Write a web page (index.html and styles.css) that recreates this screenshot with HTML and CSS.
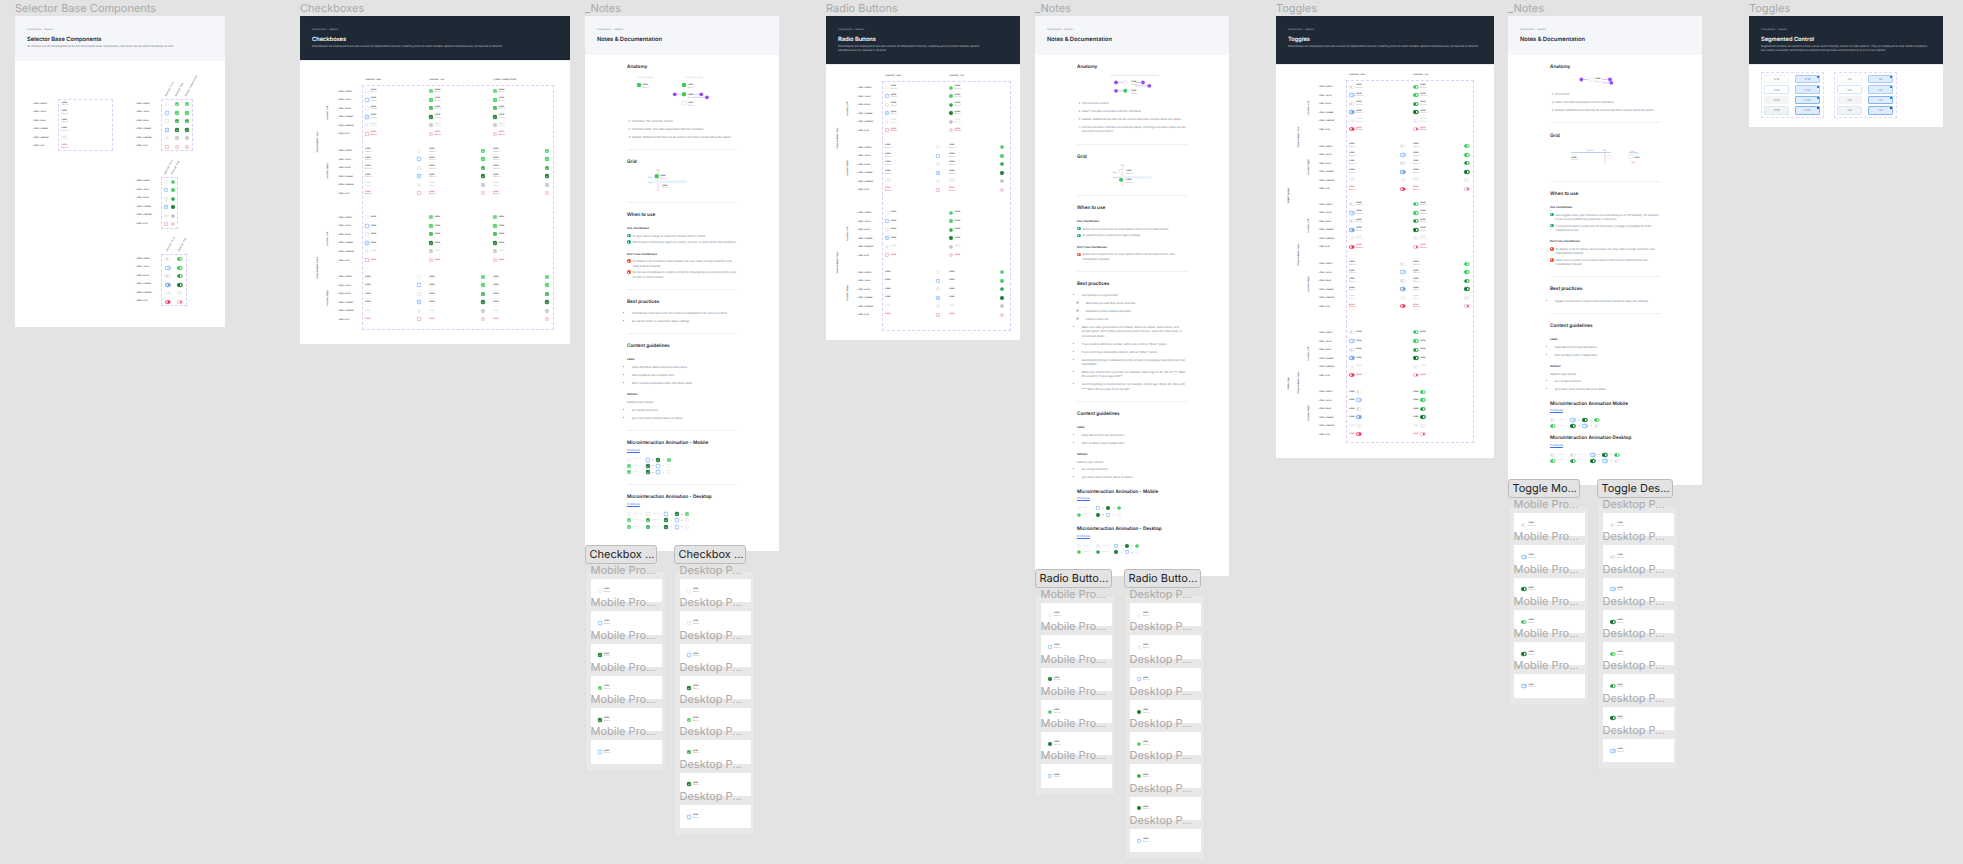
FILE: index.html
```html
<!DOCTYPE html>
<html lang="en">
<head>
    <meta charset="UTF-8">
    <meta name="viewport" content="width=device-width, initial-scale=1.0">
    <title>Selector - Components</title>
    <link rel="stylesheet" href="styles.css">
</head>
<body>
<div class="canvas">

    <!-- Selector base -->
    <div class="board b-base">
        <div class="board-name">Selector Base Components</div>
        <div class="sheet">
            <header class="sheet-head light">
                <div class="crumbs">Components &nbsp;›&nbsp; Selector</div>
                <h1>Selector Base Components</h1>
                <p>All of these are the building blocks for the full selector base components, but some can be used individually as well.</p>
            </header>
            <div class="base-body">
                <div class="base-left" id="baseLabels"></div>
                <div class="base-right">
                    <div id="baseCheck"></div>
                    <div id="baseRadio"></div>
                    <div id="baseToggle"></div>
                </div>
            </div>
        </div>
    </div>

    <!-- Checkboxes -->
    <div class="board b-check">
        <div class="board-name">Checkboxes</div>
        <div class="sheet">
            <header class="sheet-head dark">
                <div class="crumbs">Components &nbsp;›&nbsp; Selector</div>
                <h1>Checkboxes</h1>
                <p>Checkboxes are employed to provide a series of independent choices, enabling users to select multiple options simultaneously as required or desired.</p>
            </header>
            <div class="matrix m-check" id="matrixCheck"></div>
        </div>
    </div>

    <div class="board b-notes1">
        <div class="board-name">_Notes</div>
        <div class="sheet">
            <header class="sheet-head light short">
                <div class="crumbs">Components &nbsp;›&nbsp; Selector</div>
                <h1>Notes &amp; Documentation</h1>
            </header>
            <div class="notes">
                <section class="note-sec">
                    <h2>Anatomy</h2>
                    <svg class="dg" width="111" height="44.1">
                        <text class="dg-pale" x="10" y="4">Checkbox Basic</text>
                        <text class="dg-pale" x="58" y="4">Checkbox Group</text>
                        <rect class="dg-green" x="10" y="9" width="4" height="4" rx="1"/>
                        <text class="dg-label" x="15.5" y="11">Label</text>
                        <text class="dg-sub" x="15.5" y="14">Subtext</text>
                        <rect class="dg-green" x="55" y="9" width="4" height="4" rx="1"/>
                        <text class="dg-label" x="60.5" y="11">Label</text>
                        <text class="dg-sub" x="60.5" y="14">Subtext</text>
                        <path class="dg-line" d="M48 20.3H55M64 20.3H74M66 23.3H80"/>
                        <rect class="dg-green" x="55" y="18.3" width="4" height="4" rx="1"/>
                        <text class="dg-label" x="60.5" y="20.5">Label</text>
                        <text class="dg-sub" x="60.5" y="23.5">Subtext</text>
                        <circle class="dg-pin" cx="47.7" cy="20.3" r="1.9"/>
                        <circle class="dg-pin" cx="74.3" cy="20.3" r="1.9"/>
                        <circle class="dg-pin" cx="80" cy="23.3" r="1.9"/>
                        <rect class="dg-off" x="55" y="27" width="4" height="4" rx="1"/>
                        <text class="dg-label" x="60.5" y="29">Label</text>
                        <text class="dg-sub" x="60.5" y="32">Subtext</text>
                    </svg>
                    <ol class="note-list">
                        <li>Checkbox: The selection control.</li>
                        <li>Checkbox label: Text label associated with the checkbox.</li>
                        <li>Subtext: Additional text that can be used to add more context about the option.</li>
                    </ol>
                </section>
                <section class="note-sec">
                    <h2>Grid</h2>
                    <svg class="dg" width="111" height="26.3">
                        <rect class="dg-pink" x="30.5" y="3" width="1.5" height="19"/>
                        <rect class="dg-band" x="27.3" y="11.5" width="32.4" height="2.6"/>
                        <text class="dg-red" x="29.5" y="2">Gap</text>
                        <text class="dg-vio" x="21.5" y="8.5">Gap</text>
                        <text class="dg-blue" x="21" y="13.5">Right</text>
                        <rect class="dg-green" x="27.7" y="5.2" width="4" height="4" rx="1"/>
                        <text class="dg-label" x="33" y="7">Label</text>
                        <text class="dg-sub" x="33" y="10">Subtext</text>
                        <text class="dg-label" x="35" y="16.5">Label</text>
                        <text class="dg-sub" x="35" y="19">Subtext</text>
                    </svg>
                </section>
                <section class="note-sec">
                    <h2>When to use</h2>
                    <h3>Use checkboxes</h3>
                    <ul class="do-list">
                        <li class="do">To give users a range of options to choose from in a form.</li>
                        <li class="do">When users confirm they agree to a policy, service, or other terms and conditions.</li>
                    </ul>
                    <h3>Don't use checkboxes</h3>
                    <ul class="do-list">
                        <li class="dont">To display a list of options where people can only make a single selection (use radio buttons instead)</li>
                        <li class="dont">Do not use checkboxes in a table cell that is showing data or used to control a set of rows or items instead</li>
                    </ul>
                </section>
                <section class="note-sec">
                    <h2>Best practices</h2>
                    <ul class="note-bullets">
                        <li>Checkboxes work best when the control is separated in the menu of a form</li>
                        <li>An explicit action is required to apply settings</li>
                    </ul>
                </section>
                <section class="note-sec">
                    <h2>Content guidelines</h2>
                    <h3>Label</h3>
                    <ul class="note-bullets">
                        <li>Keep checkbox labels short and descriptive.</li>
                        <li>Start all labels with a capital letter.</li>
                        <li>Don't include punctuation after checkbox labels.</li>
                    </ul>
                    <h3>Subtext</h3>
                    <p class="note-copy">Subtext copy should:</p>
                    <ul class="note-bullets">
                        <li>be a single sentence</li>
                        <li>give some extra context about an option</li>
                    </ul>
                </section>
                <section class="note-sec micro">
                    <h2>Microinteraction Animation - Mobile</h2>
                    <a class="proto-link">Prototype</a>
                    <div class="seq-list" data-kind="check" data-seq="off default;Hover in;off focus;>;on pressed;>;on default|on default;Hover in;on pressed;>;off focus;>;off default|on default;Hover in;on pressed;>;off focus;>;off default"></div>
                </section>
                <section class="note-sec micro last">
                    <h2>Microinteraction Animation - Desktop</h2>
                    <a class="proto-link">Prototype</a>
                    <div class="seq-list" data-kind="check" data-seq="off default;Hover in;off hover;Hover in;off focus;>;on pressed;>;on default|on default;Hover in;on hover;Hover in;on pressed;>;off focus;>;off default|on default;Hover in;on hover;Hover in;on pressed;>;off focus;>;off default"></div>
                </section>
            </div>
        </div>
    </div>

    <!-- Radio buttons -->
    <div class="board b-radio">
        <div class="board-name">Radio Buttons</div>
        <div class="sheet">
            <header class="sheet-head dark tall">
                <div class="crumbs">Components &nbsp;›&nbsp; Selector</div>
                <h1>Radio Buttons</h1>
                <p>Checkboxes are employed to provide a series of independent choices, enabling users to select multiple options simultaneously as required or desired.</p>
            </header>
            <div class="matrix m-radio" id="matrixRadio"></div>
        </div>
    </div>

    <div class="board b-notes2">
        <div class="board-name">_Notes</div>
        <div class="sheet">
            <header class="sheet-head light short">
                <div class="crumbs">Components &nbsp;›&nbsp; Selector</div>
                <h1>Notes &amp; Documentation</h1>
            </header>
            <div class="notes">
                <section class="note-sec">
                    <h2>Anatomy</h2>
                    <svg class="dg" width="111" height="26.7">
                        <text class="dg-pale" x="33" y="2.2">Text input component displayed as radio group</text>
                        <path class="dg-line" d="M39 8.5H48M58 8.5H66M58 11.8H72"/>
                        <rect class="dg-off" x="46" y="6.5" width="4" height="4" rx="2"/>
                        <text class="dg-label" x="54" y="8.3">Label</text>
                        <text class="dg-sub" x="54" y="11.3">Subtext</text>
                        <circle class="dg-pin" cx="39" cy="8.5" r="1.9"/>
                        <circle class="dg-pin" cx="66" cy="8.5" r="1.9"/>
                        <circle class="dg-pin" cx="72.3" cy="11.8" r="1.9"/>
                        <path class="dg-line" d="M39 16.8H46"/>
                        <circle class="dg-pin" cx="39" cy="16.8" r="1.9"/>
                        <rect class="dg-green" x="46.3" y="14.8" width="4" height="4" rx="2"/>
                        <text class="dg-label" x="54" y="16.8">Label</text>
                        <text class="dg-sub" x="54" y="19.8">Subtext</text>
                    </svg>
                    <ol class="note-list">
                        <li>The selection control.</li>
                        <li>Label: Text label associated with the checkbox.</li>
                        <li>Subtext: Additional text that can be used to add more context about the option.</li>
                        <li>Current selection: Indicates the selected option. Clicking on another option will de-select the current choice.</li>
                    </ol>
                </section>
                <section class="note-sec">
                    <h2>Grid</h2>
                    <svg class="dg" width="111" height="24.5">
                        <rect class="dg-pink" x="44.8" y="3" width="1.5" height="19"/>
                        <rect class="dg-band" x="41" y="12.2" width="33.3" height="2.4"/>
                        <text class="dg-red" x="44" y="2">Gap</text>
                        <text class="dg-vio" x="36" y="9">Gap</text>
                        <text class="dg-blue" x="36" y="14">Right</text>
                        <rect class="dg-off" x="42" y="5.2" width="4" height="4" rx="2"/>
                        <text class="dg-label" x="49" y="7">Label</text>
                        <text class="dg-sub" x="49" y="10">Subtext</text>
                        <rect class="dg-green" x="42" y="13.8" width="4" height="4" rx="2"/>
                        <text class="dg-label" x="49" y="16">Label</text>
                        <text class="dg-sub" x="49" y="19">Subtext</text>
                    </svg>
                </section>
                <section class="note-sec">
                    <h2>When to use</h2>
                    <h3>Use checkboxes</h3>
                    <ul class="do-list">
                        <li class="do">Users have to select one or more options from a list of related items.</li>
                        <li class="do">An explicit action is required to apply settings.</li>
                    </ul>
                    <h3>Don't use checkboxes</h3>
                    <ul class="do-list">
                        <li class="dont">Users have to select one or more options from a list of related items (use checkboxes instead).</li>
                    </ul>
                </section>
                <section class="note-sec">
                    <h2>Best practices</h2>
                    <ul class="note-bullets">
                        <li>List options in a logical order:
                            <ul class="note-bullets sub">
                                <li>Most likely to least likely to be selected</li>
                                <li>Simplest to most complex operation</li>
                                <li>Least to most risk</li>
                            </ul>
                        </li>
                        <li>Make one radio group option the default. Select the safest, most secure, and private option. But if safety and security aren't factors, select the most likely or convenient option.</li>
                        <li>If you need to add more context, add a note within a "None" option.</li>
                        <li>If you can't have all possible options, add an "Other" option.</li>
                        <li>Avoid putting things in alphabetical order unless it is language dependent and not translatable.</li>
                        <li>Make sure choices don't overlap. For example, Select age: 0-20, 20-40 *** "Wow. Oh wouldn't I if your age is 20?"</li>
                        <li>Avoid forgetting to include choices. For example, Select age: Below 20, Above 20 *** "Wow. Did you skip if you are 20?"</li>
                    </ul>
                </section>
                <section class="note-sec tight">
                    <h2>Content guidelines</h2>
                    <h3>Label</h3>
                    <ul class="note-bullets">
                        <li>Keep labels short and descriptive.</li>
                        <li>Start all labels with a capital letter.</li>
                    </ul>
                    <h3>Subtext</h3>
                    <p class="note-copy">Subtext copy should:</p>
                    <ul class="note-bullets">
                        <li>be a single sentence</li>
                        <li>give some extra context about an option</li>
                    </ul>
                </section>
                <section class="note-sec micro plain">
                    <h2>Microinteraction Animation - Mobile</h2>
                    <a class="proto-link">Prototype</a>
                    <div class="seq-list" data-kind="radio" data-seq="off default;Hover in;off focus;>;on pressed;>;on default|on default;Hover in;on pressed;>;off focus;>;off default"></div>
                </section>
                <section class="note-sec micro plain">
                    <h2>Microinteraction Animation - Desktop</h2>
                    <a class="proto-link">Prototype</a>
                    <div class="seq-list" data-kind="radio" data-seq="off default;Hover in;off hover;Hover in;off focus;>;on pressed;>;on default|on default;Hover in;on hover;Hover in;on pressed;>;off focus;>;off default"></div>
                </section>
            </div>
        </div>
    </div>

    <!-- Toggles -->
    <div class="board b-toggle">
        <div class="board-name">Toggles</div>
        <div class="sheet">
            <header class="sheet-head dark tall">
                <div class="crumbs">Components &nbsp;›&nbsp; Selector</div>
                <h1>Toggles</h1>
                <p>Checkboxes are employed to provide a series of independent choices, enabling users to select multiple options simultaneously as required or desired.</p>
            </header>
            <div class="matrix m-toggle" id="matrixToggle"></div>
        </div>
    </div>

    <div class="board b-notes3">
        <div class="board-name">_Notes</div>
        <div class="sheet">
            <header class="sheet-head light short">
                <div class="crumbs">Components &nbsp;›&nbsp; Selector</div>
                <h1>Notes &amp; Documentation</h1>
            </header>
            <div class="notes">
                <section class="note-sec">
                    <h2>Anatomy</h2>
                    <svg class="dg" width="111" height="17.7">
                        <path class="dg-line" d="M31 5.5H38M52 5.5H60M52 8.8H61"/>
                        <rect class="dg-off" x="38.5" y="4" width="5" height="3.2" rx="1.6"/>
                        <text class="dg-label" x="45" y="5.2">Label</text>
                        <text class="dg-sub" x="45" y="8">Subtext</text>
                        <circle class="dg-pin" cx="31.3" cy="5.5" r="1.9"/>
                        <circle class="dg-pin" cx="60" cy="5.5" r="1.9"/>
                        <circle class="dg-pin" cx="61.3" cy="8.8" r="1.9"/>
                    </svg>
                    <ol class="note-list">
                        <li>The control.</li>
                        <li>Label: Text label associated with the checkbox.</li>
                        <li>Subtext: Additional text that can be used to add more context about the option.</li>
                    </ol>
                </section>
                <section class="note-sec">
                    <h2>Grid</h2>
                    <svg class="dg" width="111" height="31.7">
                        <rect class="dg-pink" x="54" y="9.5" width="1.5" height="11"/>
                        <path class="dg-bluel" d="M21.3 9.5H60.6M78.6 9.8H88.6"/>
                        <text class="dg-blue" x="37" y="8">Spread</text>
                        <text class="dg-red" x="53" y="8">Gap</text>
                        <text class="dg-label" x="21.3" y="14.5">Label</text>
                        <text class="dg-sub" x="21.3" y="17">Subtext</text>
                        <rect class="dg-off" x="56" y="12.2" width="5" height="3.2" rx="1.6"/>
                        <text class="dg-blue" x="80.5" y="8.6">Hug</text>
                        <rect class="dg-off" x="77.8" y="12.2" width="5" height="3.2" rx="1.6"/>
                        <text class="dg-label" x="84" y="14.5">Label</text>
                        <text class="dg-red" x="81.5" y="20">Gap</text>
                    </svg>
                </section>
                <section class="note-sec">
                    <h2>When to use</h2>
                    <h3>Use checkboxes</h3>
                    <ul class="do-list">
                        <li class="do">Use toggles when your intention is turn something on or off instantly, for example. If you need to additionally associate a reference.</li>
                        <li class="do">If a physical switch would work for this action, a toggle is probably the best component to use.</li>
                    </ul>
                    <h3>Don't use checkboxes</h3>
                    <ul class="do-list">
                        <li class="dont">To display a list of options where people can only make a single selection (use radio buttons instead)</li>
                        <li class="dont">Users have to select one or more options from a list of related items (use checkboxes instead).</li>
                    </ul>
                </section>
                <section class="note-sec">
                    <h2>Best practices</h2>
                    <ul class="note-bullets">
                        <li>Toggles should never require users to press a button to apply the settings.</li>
                    </ul>
                </section>
                <section class="note-sec tight">
                    <h2>Content guidelines</h2>
                    <h3>Label</h3>
                    <ul class="note-bullets">
                        <li>Keep labels short and descriptive.</li>
                        <li>Start all labels with a capital letter.</li>
                    </ul>
                    <h3>Subtext</h3>
                    <p class="note-copy">Subtext copy should:</p>
                    <ul class="note-bullets">
                        <li>be a single sentence</li>
                        <li>give some extra context about an option</li>
                    </ul>
                </section>
                <section class="note-sec micro plain">
                    <h2>Microinteraction Animation Mobile</h2>
                    <a class="proto-link">Prototype</a>
                    <div class="seq-list" data-kind="toggle" data-seq="off default;Hover in;off focus;>;on pressed;>;on default|on default;Hover in;on pressed;>;off focus;>;off default"></div>
                </section>
                <section class="note-sec micro plain">
                    <h2>Microinteraction Animation Desktop</h2>
                    <a class="proto-link">Prototype</a>
                    <div class="seq-list" data-kind="toggle" data-seq="off default;Hover in;off hover;Hover in;off focus;>;on pressed;>;on default|on default;Hover in;on hover;Hover in;on pressed;>;off focus;>;off default"></div>
                </section>
            </div>
        </div>
    </div>

    <!-- Segmented control -->
    <div class="board b-seg">
        <div class="board-name">Toggles</div>
        <div class="sheet">
            <header class="sheet-head dark tall">
                <div class="crumbs">Components &nbsp;›&nbsp; Selector</div>
                <h1>Segmented Control</h1>
                <p>Segmented controls are used in a more visual, touch-friendly version of radio buttons. They are displayed to look similar to buttons, but used in a situation where there is a decision being made and selected out of 2 or more options.</p>
            </header>
            <div class="seg-body">
                <div class="seg-box" data-text="1250"></div>
                <div class="seg-box" data-text="Yes"></div>
            </div>
        </div>
    </div>

    <!-- Prototype stacks -->
    <div class="proto-set p-check-m" data-kind="check" data-title="Checkbox ..." data-name="Mobile Pro..." data-items="off default,off focus,on pressed,on default,on pressed,off focus"></div>
    <div class="proto-set p-check-d" data-kind="check" data-title="Checkbox ..." data-name="Desktop P..." data-items="off default,off hover,off focus,on pressed,on default,on hover,on pressed,off focus"></div>
    <div class="proto-set p-radio-m" data-kind="radio" data-title="Radio Butto..." data-name="Mobile Pro..." data-items="off default,off focus,on pressed,on default,on pressed,off focus"></div>
    <div class="proto-set p-radio-d" data-kind="radio" data-title="Radio Butto..." data-name="Desktop P..." data-items="off default,off hover,off focus,on pressed,on default,on hover,on pressed,off focus"></div>
    <div class="proto-set p-toggle-m" data-kind="toggle" data-title="Toggle Mo..." data-name="Mobile Pro..." data-items="off default,off focus,on pressed,on default,on pressed,off focus"></div>
    <div class="proto-set p-toggle-d" data-kind="toggle" data-title="Toggle Des..." data-name="Desktop P..." data-items="off default,off hover,off focus,on pressed,on default,on hover,on pressed,off focus"></div>

</div>
<script src="app.js"></script>
</body>
</html>
```

FILE: styles.css
```css
* {
    box-sizing: border-box;
}
html, body {
    margin: 0;
    padding: 0;
}
body {
    font-family: Inter, "Liberation Sans", sans-serif;
    text-rendering: geometricPrecision;
    background-color: #e3e3e3;
    color: #1d2733;
}
.canvas {
    position: relative;
    width: 1963px;
    height: 864px;
    overflow: hidden;
}

/* boards sit on a free canvas, so each one has its own place */
.board {
    position: absolute;
    top: 2px;
}
.b-base { left: 15px; width: 210px; }
.b-check { left: 300px; width: 270px; }
.b-notes1 { left: 585px; width: 194px; }
.b-radio { left: 826px; width: 194px; }
.b-notes2 { left: 1035px; width: 194px; }
.b-toggle { left: 1276px; width: 218px; }
.b-notes3 { left: 1508px; width: 194px; }
.b-seg { left: 1749px; width: 194px; }

.b-base .sheet { height: 311px; }
.b-check .sheet { height: 328px; }
.b-notes1 .sheet { height: 535px; }
.b-radio .sheet { height: 324px; }
.b-notes2 .sheet { height: 560px; }
.b-toggle .sheet { height: 442px; }
.b-notes3 .sheet { height: 469px; }
.b-seg .sheet { height: 111px; }

.board-name {
    height: 14px;
    font-size: 11px;
    line-height: 13px;
    color: #a9a9a9;
    white-space: nowrap;
}
.sheet {
    background-color: #fff;
    overflow: hidden;
}

/* sheet header */
.sheet-head {
    height: 45px;
    padding: 12px 12px 0;
}
.sheet-head.short { height: 39px; }
.sheet-head.tall { height: 49px; }
.sheet-head.light { background-color: #f4f6fa; color: #1d2733; }
.sheet-head.dark {
    background-color: #1e2935;
    color: #fff;
    border-bottom: 1px solid #e8ebf0;
}
.crumbs {
    font-size: 2.3px;
    line-height: 4px;
    color: #7d8a9c;
}
.dark .crumbs { color: #a9b3bf; }
.sheet-head h1 {
    margin: 4px 0 0;
    font-size: 5.7px;
    line-height: 7px;
    font-weight: 600;
}
.sheet-head p {
    margin: 1px 0 0;
    font-size: 2.7px;
    line-height: 4.2px;
    color: #5c6877;
}
.dark p { color: #c4cad2; }
.b-radio .sheet-head p { width: 158px; }
.b-seg .sheet-head p { width: 170px; }

/* state matrix */
.matrix {
    position: relative;
    display: flow-root;
    font-size: 2.2px;
    color: #3a3f47;
}
.matrix .dash {
    position: absolute;
    border: 1px dashed #dccdfb;
}
.m-check { margin: 26px 0 0 12px; --state-w: 28px; --cell-w: 56px; --row-h: 8.53px; }
.m-check .dash { left: 50px; width: 192px; top: -2px; height: 245px; }
.m-radio { margin: 18.4px 0 0 5.5px; --state-w: 28.5px; --cell-w: 55px; --row-h: 8.53px; }
.m-radio .dash { left: 50.5px; width: 129px; top: -2.4px; height: 250px; }
.m-toggle { margin: 17.4px 0 0 7.5px; --state-w: 31.5px; --cell-w: 56px; --row-h: 8.53px; }
.m-toggle .dash { left: 62.5px; width: 128px; top: -2.4px; height: 363px; }

.col-heads {
    display: flex;
    height: 4px;
    line-height: 4px;
}
.col-head { width: 64px; white-space: nowrap; }
.m-check .col-heads { margin: -9px 0 5px 53px; }
.m-radio .col-heads { margin: -9px 0 5px 53.5px; }
.m-toggle .col-heads { margin: -9px 0 5px 65.5px; }

.grp {
    display: flex;
}
.grp-label {
    display: flex;
    align-items: center;
    justify-content: center;
    writing-mode: vertical-rl;
    transform: rotate(180deg);
    white-space: nowrap;
    font-weight: 600;
    width: 10px;
    flex: none;
}
.lvl-loc > .grp-label { width: 15px; padding-left: 5px; font-weight: 500; }
.m-toggle .lvl-width > .grp-label { width: 9px; }
.grp-body {
    display: flex;
    flex-direction: column;
}
.lvl-width > .grp-body { gap: 7.2px; }
.lvl-tier > .grp-body { gap: 8.3px; }
.tiers { display: flex; flex-direction: column; }
.m-check .tiers { gap: 15.7px; }
.m-radio .tiers { gap: 14.5px; }
.m-toggle .tiers { gap: 17.7px; }

.m-row {
    display: flex;
    align-items: center;
    height: var(--row-h);
}
.m-state {
    width: var(--state-w);
    padding-left: 1px;
    flex: none;
    white-space: nowrap;
}
.m-cell {
    width: 64px;
    flex: none;
}
.cell {
    display: flex;
    align-items: center;
    gap: 1.6px;
    width: var(--cell-w);
    color: #2b2f36;
}
.cell.right {
    flex-direction: row-reverse;
    justify-content: space-between;
}
.cell.right.hug { justify-content: flex-end; }
.cell-text {
    display: flex;
    flex-direction: column;
    line-height: 2.6px;
    font-size: 2.2px;
}
.cell-text small {
    font-size: 1.9px;
    color: #9aa1ab;
}
.cell.is-disabled .cell-text, .cell.is-disabled .cell-text small { color: #c9c9c9; }
.cell.is-error .cell-text, .cell.is-error .cell-text small { color: #f0325a; }

/* the selection controls are drawn larger and scaled down,
   borders under 1px get rounded up otherwise */
.ctl {
    position: relative;
    display: block;
    flex: none;
    width: 8px;
    height: 8px;
    margin: -2px;
    transform: scale(0.45);
    background-color: #fff;
    border: 1px solid #dcdcdc;
}
.ctl.check { border-radius: 2px; }
.ctl.radio { border-radius: 50%; }
.ctl.toggle { width: 11.5px; margin: -2px -3px; border-radius: 4px; }

.ctl.off.hover { border-color: #c6c6c6; }
.ctl.off.focus { border: 1.4px solid #8fc1ff; box-shadow: 0 0 0 0.8px #8fc1ff; }
.ctl.off.pressed { background-color: #d8e8ff; border: 1.4px solid #8fc1ff; box-shadow: 0 0 0 0.8px #8fc1ff; }
.ctl.off.disabled { background-color: #eee; border-color: #eee; }
.ctl.off.error { border-color: #f5a0b2; box-shadow: 0 0 0 0.6px #f5a0b2; }

.ctl.on { background-color: #37cb59; border-color: #37cb59; }
.ctl.on.hover { background-color: #1b9e3c; border-color: #1b9e3c; }
.ctl.on.focus { box-shadow: 0 0 0 0.8px #a3e7b4; }
.ctl.on.pressed { background-color: #0c6a24; border-color: #0c6a24; box-shadow: 0 0 0 0.8px #79c08c; }
.ctl.on.disabled { background-color: #bdbdbd; border-color: #bdbdbd; }
.ctl.on.error { background-color: #fbd3db; border-color: #f5a0b2; }

/* tick */
.ctl.check.on::after {
    content: "";
    position: absolute;
    left: 1.2px;
    top: 1px;
    width: 4px;
    height: 2.4px;
    border-left: 1px solid #fff;
    border-bottom: 1px solid #fff;
    transform: rotate(-45deg);
}
.ctl.radio.on::after {
    content: "";
    position: absolute;
    left: 1.75px;
    top: 1.75px;
    width: 2.5px;
    height: 2.5px;
    border-radius: 50%;
    background-color: #fff;
}
/* toggle knob */
.ctl.toggle::after {
    content: "";
    position: absolute;
    top: 1px;
    left: 1px;
    width: 4px;
    height: 4px;
    border-radius: 50%;
    background-color: #cfcfcf;
}
.ctl.toggle.on::after { left: 4.5px; background-color: #fff; }
.ctl.toggle.off.focus { background-color: #cfe1fa; }
.ctl.toggle.off.pressed { background-color: #7fa5d8; border-color: #8fb4e6; }
.ctl.toggle.off.focus::after, .ctl.toggle.off.pressed::after { background-color: #fff; }
.ctl.toggle.off.disabled::after { background-color: #fff; }
.ctl.toggle.off.error { background-color: #f0325a; border-color: #f0325a; box-shadow: none; }
.ctl.toggle.off.error::after { background-color: #fff; }
.ctl.toggle.on.disabled { background-color: #eee; border-color: #e4e4e4; }
.ctl.toggle.on.error { background-color: #fff; border-color: #f06a85; }
.ctl.toggle.on.error::after { background-color: #f0325a; }

/* base components sheet */
.base-body {
    display: flex;
    padding: 38px 0 0 18px;
    font-size: 2.2px;
    color: #3a3f47;
}
.base-left { width: 95px; flex: none; margin-right: 8px; }
.base-right {
    display: flex;
    flex-direction: column;
    gap: 25.5px;
}
.base-group {
    display: flex;
}
.base-states { width: 25px; flex: none; }
.base-states div, .dash-box .b-cell { height: 8.5px; }
.base-states div { display: flex; align-items: center; white-space: nowrap; }
.dash-box {
    position: relative;
    display: grid;
    height: 52px;
    border: 1px dashed #dccdfb;
    align-content: start;
}
.base-left .dash-box { width: 55px; padding-left: 2.5px; }
.b-cell {
    display: flex;
    align-items: center;
    justify-content: center;
}
.base-left .b-cell { justify-content: flex-start; }
.rot-head {
    position: absolute;
    bottom: 100%;
    margin-bottom: 3px;
    transform-origin: left bottom;
    transform: rotate(-62deg);
    white-space: nowrap;
    font-size: 2.2px;
    line-height: 3px;
}

/* notes */
.notes {
    margin-left: 42px;
    width: 111px;
    font-size: 2.7px;
    line-height: 4.3px;
    color: #6d7683;
}
.note-sec {
    padding: 9.2px 0 6.2px;
    border-bottom: 0.5px solid #eef0f3;
}
.note-sec.last { border-bottom: none; }
.note-sec.tight { padding-bottom: 0; border-bottom: none; }
.note-sec h2 {
    margin: 0 0 5.3px;
    font-size: 4.7px;
    line-height: 7px;
    font-weight: 600;
    color: #1d2733;
}
.note-sec h3 {
    margin: 7px 0 3.4px;
    font-size: 2.8px;
    line-height: 4.3px;
    font-weight: 600;
    color: #1d2733;
}
.note-list, .note-bullets {
    margin: 0;
    padding-left: 4.7px;
}
.note-list li, .note-bullets li {
    margin-bottom: 3.7px;
}
.note-bullets.sub { margin-top: 3.7px; padding-left: 4px; }
.note-copy {
    margin: 0 0 3.2px;
}
.do-list {
    margin: 0;
    padding: 0;
    list-style: none;
}
.do-list:last-child { padding-bottom: 1.2px; }
.do-list li {
    position: relative;
    margin-bottom: 2.4px;
    padding-left: 5.6px;
}
.do-list li::before {
    content: "";
    position: absolute;
    left: 0;
    top: 0.2px;
    width: 3.6px;
    height: 3.6px;
    border-radius: 50%;
}
.do-list li::after {
    content: "";
    position: absolute;
    left: 1.2px;
    top: 1.4px;
    width: 1.2px;
    height: 1.2px;
    background-color: #fff;
}
.do-list .do::before { background-color: #1fa874; }
.do-list .dont::before { background-color: #f3522f; }
.proto-link {
    display: block;
    margin-top: -4.6px;
    color: #3b6ef5;
    text-decoration: underline;
    line-height: 4px;
    font-size: 2.8px;
}
.micro { padding-bottom: 9px; }
.micro.plain { padding: 5.6px 0 3px; border-bottom: none; }
.b-notes3 .micro.plain { padding-bottom: 1px; }
.seq-list {
    margin-top: 4.8px;
}
.seq {
    display: flex;
    align-items: center;
    gap: 2.5px;
    height: 6.3px;
}
.b-notes3 .seq { height: 5.8px; }
.seq-text {
    width: 9.5px;
    flex: none;
    font-size: 1.9px;
    color: #c4c8ce;
    white-space: nowrap;
}
.seq-arrow {
    width: 1.5px;
    height: 1px;
    flex: none;
    background-color: #d5d8dc;
}

/* svg diagrams */
.dg {
    display: block;
    margin-top: -2px;
    overflow: visible;
    font-size: 2.2px;
}
.dg text { font-family: Inter, "Liberation Sans", sans-serif; }
.dg-pale { fill: #c9cdd3; }
.dg-label { fill: #2b2f36; }
.dg-sub { fill: #a4aab3; font-size: 1.9px; }
.dg-red { fill: #ef4a68; font-size: 1.9px; }
.dg-vio { fill: #9b5cf6; font-size: 1.9px; }
.dg-blue { fill: #4d8df6; font-size: 1.9px; }
.dg-green { fill: #37cb59; }
.dg-off { fill: #fff; stroke: #d6d6d6; stroke-width: 0.5; }
.dg-pin { fill: #9a4df6; }
.dg-line { fill: none; stroke: #b78cf8; stroke-width: 0.5; }
.dg-bluel { fill: none; stroke: #6ea3f7; stroke-width: 0.5; }
.dg-pink { fill: #fbdde3; }
.dg-band { fill: #e8f1fe; }

/* segmented control */
.seg-body {
    display: flex;
    gap: 10px;
    padding: 7px 0 0 12px;
}
.seg-box {
    display: grid;
    grid-template-columns: 25px 25px;
    column-gap: 6px;
    row-gap: 1.8px;
    width: 63px;
    height: 46px;
    padding: 2px;
    border: 1px dashed #e3d8fb;
}
.seg {
    position: relative;
    display: flex;
    align-items: center;
    justify-content: center;
    height: 8.2px;
    font-size: 2.6px;
    color: #7a8492;
    background-color: #fff;
    border: 1px solid #f4f5f7;
    border-radius: 1px;
}
.seg.r1 { border: 1px solid #d5e6fb; }
.seg.r2 { background-color: #f3f4f5; border-color: #f3f4f5; }
.seg.r3 { background-color: #f1f2f3; border: 1px solid #d7e8fb; }
.seg.pick { background-color: #dfecfd; border: 1px solid #a9cdf8; color: #5d8fd8; }
.seg.pick.r2, .seg.pick.r3 { border: 1px solid #84b4ef; }
.seg.pick::after {
    content: "";
    position: absolute;
    right: 0;
    top: 0;
    width: 2px;
    height: 2px;
    background-color: #2f7bea;
}
.seg.pick.r3::after { background-color: #1d4f9b; }

/* prototype stacks */
.proto-set {
    position: absolute;
    width: 81px;
}
.p-check-m { left: 585px; top: 545px; }
.p-check-d { left: 674px; top: 545px; }
.p-radio-m { left: 1035px; top: 569px; }
.p-radio-d { left: 1124px; top: 569px; }
.p-toggle-m { left: 1508px; top: 479px; }
.p-toggle-d { left: 1597px; top: 479px; }
.proto-title {
    width: 72px;
    height: 19px;
    padding: 0 3.5px;
    background-color: #e3e3e3;
    border: 1px solid #bcbcbc;
    border-radius: 3px;
    font-size: 11px;
    line-height: 17px;
    color: #222;
    white-space: nowrap;
    overflow: hidden;
}
.p-radio-m .proto-title, .p-radio-d .proto-title { width: 77px; }
.p-toggle-d .proto-title { width: 76px; }
.proto-panel {
    margin-top: 7px;
    padding: 0 4.5px 7px;
    background-color: #e8e8e8;
    border: 0.5px solid #e0e0e0;
}
.proto-name {
    position: relative;
    width: 70px;
    height: 14px;
    font-size: 11px;
    line-height: 10px;
    color: #a9a9a9;
    white-space: nowrap;
}
.proto-panel > .proto-item { margin-top: -5px; }
.proto-panel > .proto-item:first-child { margin-top: -7px; }
.proto-card {
    display: flex;
    align-items: center;
    gap: 1.7px;
    height: 23.3px;
    width: 71px;
    padding-left: 7.5px;
    background-color: #fff;
    color: #2b2f36;
}
```

FILE: app.js
```js
var STATES = ["default", "focus", "hover", "pressed", "disabled", "error"];
var TITLES = { default: "Default", focus: "Focus", hover: "Hover", pressed: "Pressed", disabled: "Disabled", error: "Error" };

function el(tag, cls, text) {
    var node = document.createElement(tag);
    if (cls) node.className = cls;
    if (text) node.textContent = text;
    return node;
}

function control(kind, classes) {
    return el("span", "ctl " + kind + " " + classes);
}

function textBlock(sub) {
    var box = el("span", "cell-text");
    box.appendChild(el("span", "", "Label"));
    if (sub) box.appendChild(el("small", "", "Subtext"));
    return box;
}

function cell(kind, on, state, opts) {
    var box = el("div", "cell is-" + state + (opts.right ? " right" : "") + (opts.hug ? " hug" : ""));
    box.appendChild(control(kind, (on ? "on " : "off ") + state));
    box.appendChild(textBlock(opts.sub));
    return box;
}

function stateRows(kind, cols, opts) {
    var wrap = el("div", "rows");
    STATES.forEach(function (state) {
        var row = el("div", "m-row");
        row.appendChild(el("div", "m-state", "State: " + TITLES[state]));
        cols.forEach(function (on) {
            var c = el("div", "m-cell");
            c.appendChild(cell(kind, on, state, opts));
            row.appendChild(c);
        });
        wrap.appendChild(row);
    });
    return wrap;
}

function group(level, label, kids) {
    var g = el("div", "grp lvl-" + level);
    var l = el("div", "grp-label");
    l.appendChild(el("span", "", label));
    g.appendChild(l);
    var body = el("div", "grp-body");
    kids.forEach(function (k) { body.appendChild(k); });
    g.appendChild(body);
    return g;
}

function tier(kind, cols, name, sub, hug) {
    return group("tier", "Show Subtext: " + name, [
        group("loc", "Location: Left", [stateRows(kind, cols, { sub: sub, hug: hug })]),
        group("loc", "Location: Right", [stateRows(kind, cols, { sub: sub, hug: hug, right: true })])
    ]);
}

function heads(names) {
    var box = el("div", "col-heads");
    names.forEach(function (n) { box.appendChild(el("div", "col-head", n)); });
    return box;
}

function buildMatrix(id, kind, names, cols) {
    var m = document.getElementById(id);
    m.appendChild(el("div", "dash"));
    m.appendChild(heads(names));
    var tiers = el("div", "tiers");
    if (kind === "toggle") {
        tiers.appendChild(group("width", "Width: Spread", [tier(kind, cols, "True", true), tier(kind, cols, "False", true)]));
        tiers.appendChild(group("width", "Width: Hug", [tier(kind, cols, "False", false, true)]));
    } else {
        tiers.appendChild(tier(kind, cols, "True", true));
        tiers.appendChild(tier(kind, cols, "False", false));
    }
    m.appendChild(tiers);
}

buildMatrix("matrixCheck", "check", ["Selected: False", "Selected: True", "System: Indeterminate"], [false, true, true]);
buildMatrix("matrixRadio", "radio", ["Selected: False", "Selected: True"], [false, true]);
buildMatrix("matrixToggle", "toggle", ["Selected: False", "Selected: True"], [false, true]);

// base sheet
function baseGroup(parent, kind, names, cols, colW) {
    var g = el("div", "base-group");
    var states = el("div", "base-states");
    STATES.forEach(function (s) { states.appendChild(el("div", "", "State: " + TITLES[s])); });
    g.appendChild(states);
    var box = el("div", "dash-box");
    box.style.gridTemplateColumns = "repeat(" + cols.length + ", " + colW + "px)";
    STATES.forEach(function (s) {
        cols.forEach(function (on) {
            var c = el("div", "b-cell");
            c.appendChild(control(kind, (on ? "on " : "off ") + s));
            box.appendChild(c);
        });
    });
    names.forEach(function (n, i) {
        var h = el("div", "rot-head", n);
        h.style.left = (colW * i + colW / 2) + "px";
        box.appendChild(h);
    });
    g.appendChild(box);
    parent.appendChild(g);
}

(function () {
    var left = el("div", "base-group");
    var states = el("div", "base-states");
    var box = el("div", "dash-box");
    STATES.forEach(function (s) {
        states.appendChild(el("div", "", "State: " + TITLES[s]));
        var c = el("div", "b-cell cell is-" + s);
        c.appendChild(textBlock(true));
        box.appendChild(c);
    });
    left.appendChild(states);
    left.appendChild(box);
    document.getElementById("baseLabels").appendChild(left);
})();

baseGroup(document.getElementById("baseCheck"), "check", ["Selected: False", "Selected: True", "System: Indeterminate"], [false, true, true], 10);
baseGroup(document.getElementById("baseRadio"), "radio", ["Selected: False", "Selected: True"], [false, true], 7.5);
baseGroup(document.getElementById("baseToggle"), "toggle", ["Selected: False", "Selected: True"], [false, true], 12);

// little state-flow rows in the notes
document.querySelectorAll(".seq-list").forEach(function (list) {
    var kind = list.dataset.kind;
    list.dataset.seq.split("|").forEach(function (line) {
        var row = el("div", "seq");
        line.split(";").forEach(function (tok) {
            if (tok === ">") row.appendChild(el("span", "seq-arrow"));
            else if (tok.indexOf("off ") === 0 || tok.indexOf("on ") === 0) row.appendChild(control(kind, tok));
            else row.appendChild(el("span", "seq-text", tok));
        });
        list.appendChild(row);
    });
});

// segmented control states
document.querySelectorAll(".seg-box").forEach(function (box) {
    for (var r = 0; r < 4; r++) {
        box.appendChild(el("div", "seg r" + r, box.dataset.text));
        box.appendChild(el("div", "seg pick r" + r, box.dataset.text));
    }
});

// prototype stacks under the notes
document.querySelectorAll(".proto-set").forEach(function (set) {
    var kind = set.dataset.kind;
    set.appendChild(el("div", "proto-title", set.dataset.title));
    var panel = el("div", "proto-panel");
    set.dataset.items.split(",").forEach(function (item) {
        var wrap = el("div", "proto-item");
        wrap.appendChild(el("div", "proto-name", set.dataset.name));
        var card = el("div", "proto-card");
        card.appendChild(control(kind, item));
        card.appendChild(textBlock(true));
        wrap.appendChild(card);
        panel.appendChild(wrap);
    });
    set.appendChild(panel);
});
```
